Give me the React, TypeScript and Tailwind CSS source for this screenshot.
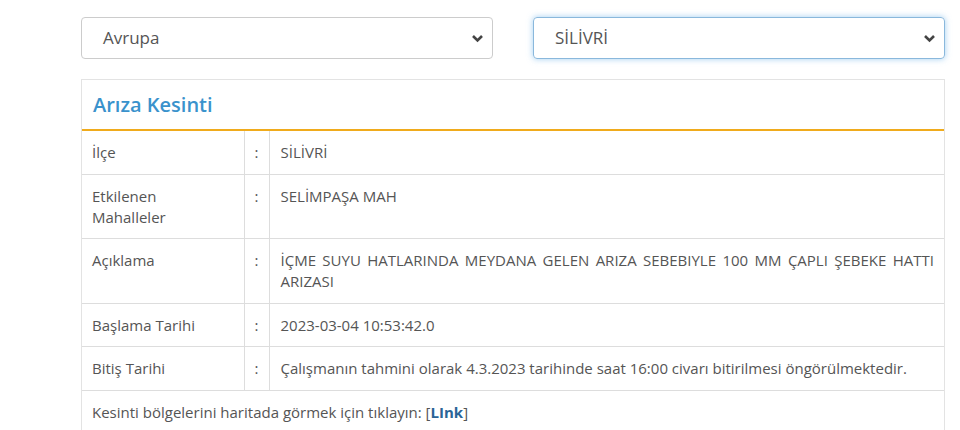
type Row = { label: string; value: string };

const rows: Row[] = [
  { label: 'İlçe', value: 'SİLİVRİ' },
  { label: 'Etkilenen Mahalleler', value: 'SELİMPAŞA MAH' },
  {
    label: 'Açıklama',
    value: 'İÇME SUYU HATLARINDA MEYDANA GELEN ARIZA SEBEBIYLE 100 MM ÇAPLI ŞEBEKE HATTI ARIZASI',
  },
  { label: 'Başlama Tarihi', value: '2023-03-04 10:53:42.0' },
  {
    label: 'Bitiş Tarihi',
    value: 'Çalışmanın tahmini olarak 4.3.2023 tarihinde saat 16:00 civarı bitirilmesi öngörülmektedir.',
  },
];

const Caret = () => (
  <svg width="13" height="9" viewBox="0 0 13 9" className="text-[#444]">
    <polyline points="2,2 6.5,6.5 11,2" fill="none" stroke="currentColor" strokeWidth="2.6" />
  </svg>
);

const Select = ({ text, focused }: { text: string; focused?: boolean }) => (
  <div
    className={
      focused
        ? 'flex items-center justify-between h-[42px] flex-1 rounded border border-[#8ab8dc] shadow-[0_0_6px_rgba(102,175,233,0.6)] pl-[21px] pr-[8px] text-[17px] text-[#555]'
        : 'flex items-center justify-between h-[42px] flex-1 rounded border border-[#ccc] pl-[21px] pr-[8px] text-[17px] text-[#555]'
    }
  >
    <span>{text}</span>
    <Caret />
  </div>
);

const App = () => {
  return (
    <div className="w-[960px] h-[430px] overflow-hidden bg-white font-['Open_Sans',sans-serif] text-[#555]">
      <div className="pl-[81px] pr-[15px] pt-[17px]">
        <div className="flex gap-[40px]">
          <Select text="Avrupa" />
          <Select text="SİLİVRİ" focused />
        </div>

        <div className="mt-[20px] border border-[#e3e3e3]">
          <div className="h-[51px] flex items-center px-[11px] border-b-2 border-[#f0ab1c]">
            <span className="text-[20px] font-semibold text-[#3a92cc]">Arıza Kesinti</span>
          </div>
          <table className="w-full text-[15px] leading-[21px] border-collapse">
            <tbody>
              {rows.map((r) => (
                <tr key={r.label} className="border-b border-[#ddd]">
                  <td className="w-[162px] align-top px-[10px] pt-[11px] pb-[10.5px] border-r border-[#ddd]">{r.label}</td>
                  <td className="w-[25px] align-top text-center pt-[11px] pb-[10.5px] border-r border-[#ddd]">:</td>
                  <td className="align-top pl-[11px] pr-[10px] pt-[11px] pb-[10.5px] text-justify">{r.value}</td>
                </tr>
              ))}
            </tbody>
          </table>
          <div className="px-[10px] pt-[11px] pb-[10px] text-[15px] leading-[21px]">
            Kesinti bölgelerini haritada görmek için tıklayın:{' '}
            <span>
              [<span className="font-bold text-[#2a6496]">LInk</span>]
            </span>
          </div>
        </div>
      </div>
    </div>
  );
};

export default App;
